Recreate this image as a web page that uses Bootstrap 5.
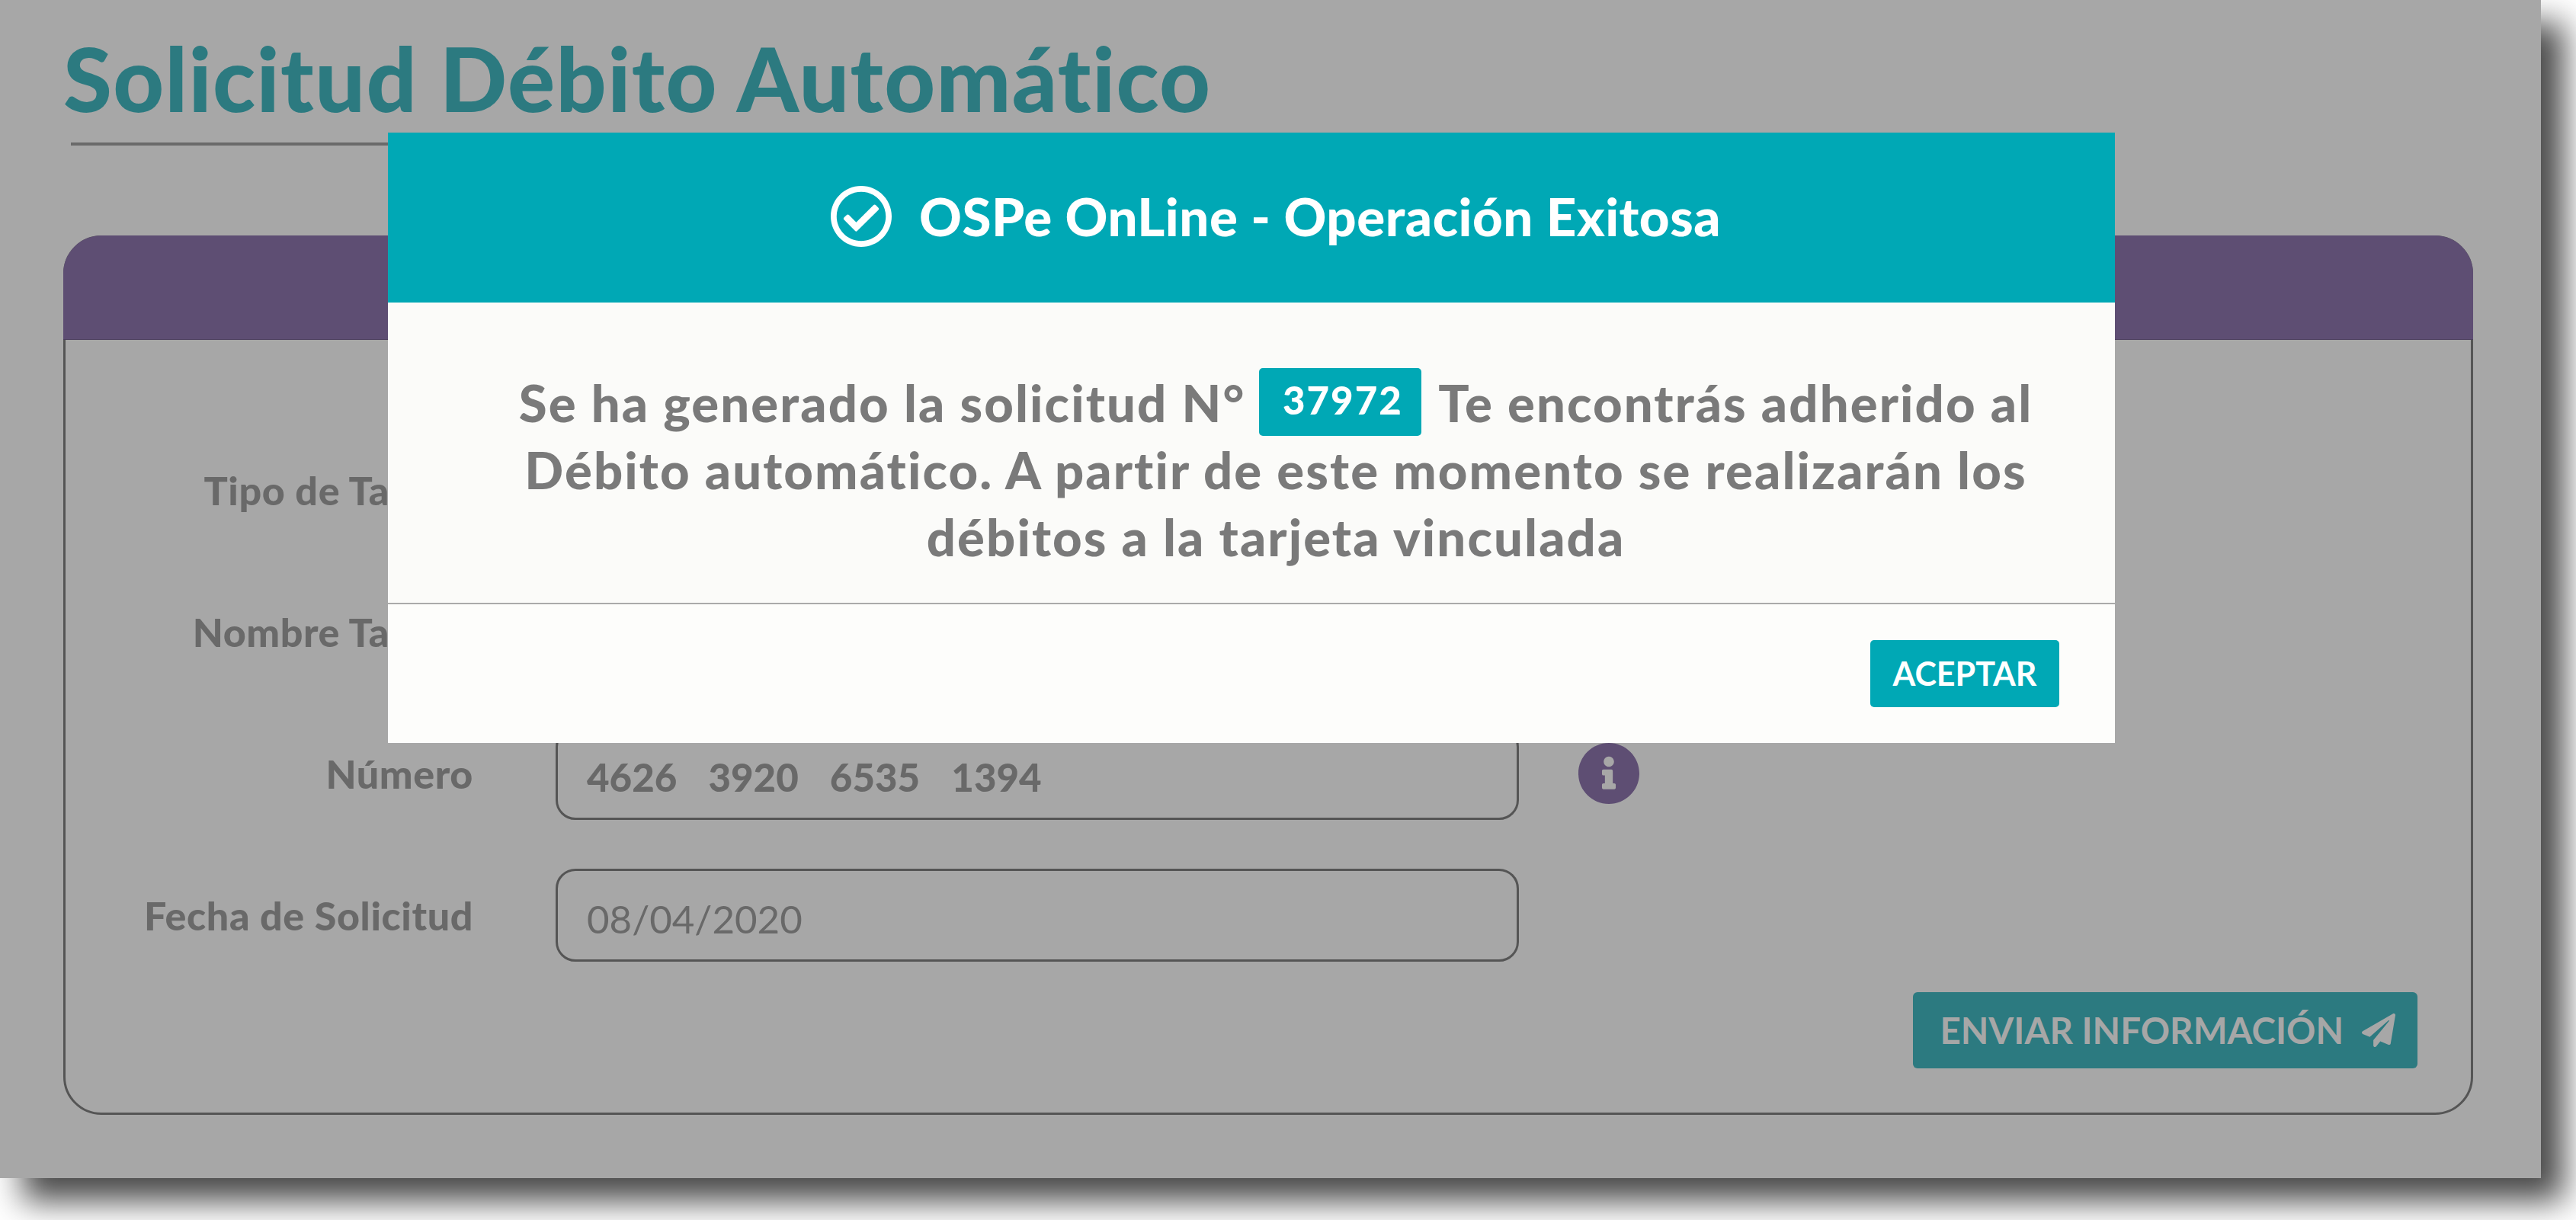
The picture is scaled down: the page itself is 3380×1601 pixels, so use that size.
<!DOCTYPE html>
<html lang="es">

<head>
    <meta charset="utf-8">
    <title>Solicitud Débito Automático</title>
    <link rel="stylesheet" href="https://cdn.jsdelivr.net/npm/bootstrap@5.3.0/dist/css/bootstrap.min.css">
    <style>
        body {
            min-height: 1601px;
            background: #fff;
            font-family: "Lato", sans-serif;
            font-variant-ligatures: none;
        }

        .pantalla {
            position: relative;
            width: 3334px;
            height: 1546px;
            padding: 26px 89px 0 83px;
            background: #a7a7a7;
            box-shadow: 30px 30px 40px #4a4a4a;
        }

        .titulo {
            margin: 0;
            font-size: 116px;
            font-weight: 900;
            line-height: 154px;
            letter-spacing: 1.4px;
            color: #2c7a80;
        }

        .subrayado {
            width: 800px;
            height: 4px;
            margin: 7px 0 0 10px;
            background: #6a6a6a;
        }

        .tarjeta {
            height: 1154px;
            margin-top: 118px;
            background: transparent;
            border: 3px solid #555;
            border-radius: 50px;
        }

        .tarjeta .tarjeta-cabecera {
            height: 137px;
            margin: -3px -3px 0;
            background: #5e4e73;
            border-radius: 50px 50px 0 0;
        }

        .tarjeta-cuerpo {
            padding: 136px 70px 0 0;
        }

        .fila {
            height: 122px;
            margin-bottom: 64px;
        }

        .etiqueta {
            width: 535px;
            margin: 0 108px 0 0;
            font-size: 52px;
            font-weight: 900;
            letter-spacing: .6px;
            text-align: right;
            color: #696969;
        }

        .campo.form-control {
            width: 1264px;
            height: 122px;
            padding: 8px 38px 0;
            font-size: 51px;
            color: #696969;
            background: transparent;
            border: 3px solid #555;
            border-radius: 26px;
        }

        .campo-numero.form-control {
            font-weight: 900;
            word-spacing: 29px;
        }

        .icono-info {
            width: 80px;
            height: 80px;
            margin-left: 78px;
            fill: #5e4e73;
        }

        .btn-enviar.btn {
            height: 100px;
            margin-top: -24px;
            padding: 0 29px 0 35px;
            font-size: 47.5px;
            font-weight: 700;
            color: #a7a7a7;
            background: #2c7a80;
            border: 0;
            border-radius: 6px;
        }

        .btn-enviar svg {
            width: 44px;
            height: 44px;
            margin-left: 24px;
            fill: #a7a7a7;
        }

        .aviso.modal {
            position: absolute;
            width: 100%;
            height: 100%;
            overflow: visible;
        }

        .aviso .modal-dialog {
            max-width: none;
            width: 2266px;
            margin: 174px 0 0 509px;
        }

        .aviso .modal-content {
            background: #fbfbf9;
            border: 0;
            border-radius: 0;
        }

        .aviso .modal-header {
            height: 223px;
            padding: 0 0 4px 64px;
            color: #fff;
            background: #00a8b5;
            border: 0;
            border-radius: 0;
        }

        .aviso .modal-title {
            font-size: 69px;
            font-weight: 900;
            line-height: 1;
            letter-spacing: .5px;
        }

        .aviso .modal-header svg {
            width: 80px;
            height: 80px;
            margin-right: 36px;
            fill: #fff;
        }

        .aviso .modal-body {
            height: 396px;
            padding: 87px 0 0 64px;
            font-size: 67px;
            font-weight: 900;
            line-height: 88px;
            letter-spacing: 2.1px;
            text-align: center;
            color: #7a7a7a;
            border-bottom: 2px solid #aaa;
        }

        .numero-solicitud {
            display: inline-block;
            width: 213px;
            height: 89px;
            margin: -1px 6px -1px 0;
            padding-left: 6px;
            vertical-align: top;
            font-size: 51px;
            line-height: 84px;
            letter-spacing: 2px;
            color: #fff;
            background: #00a8b5;
            border-radius: 5px;
        }

        .aviso .modal-footer {
            height: 182px;
            padding: 0 73px 0 0;
            background: #fdfdfb;
            border: 0;
            border-radius: 0;
        }

        .btn-aceptar.btn {
            width: 248px;
            height: 88px;
            margin: 0;
            padding: 0;
            font-size: 43px;
            font-weight: 700;
            color: #fff;
            background: #00a8b5;
            border: 0;
            border-radius: 5px;
        }
    </style>
</head>

<body>
    <div class="pantalla">
        <h1 class="titulo">Solicitud Débito Automático</h1>
        <div class="subrayado"></div>

        <div class="card tarjeta">
            <div class="card-header tarjeta-cabecera"></div>
            <div class="tarjeta-cuerpo">
                <div class="d-flex align-items-center fila">
                    <label class="etiqueta">Tipo de Tarjeta</label>
                    <input class="form-control campo" type="text" value="VISA" readonly>
                </div>
                <div class="d-flex align-items-center fila">
                    <label class="etiqueta">Nombre Tarjeta</label>
                    <input class="form-control campo" type="text" value="" readonly>
                </div>
                <div class="d-flex align-items-center fila">
                    <label class="etiqueta">Número</label>
                    <input class="form-control campo campo-numero" type="text" value="4626 3920 6535 1394" readonly>
                    <svg class="icono-info" viewBox="8 8 496 496"><path d="M256 8C119.043 8 8 119.083 8 256c0 136.997 111.043 248 248 248s248-111.003 248-248C504 119.083 392.957 8 256 8zm0 110c23.196 0 42 18.804 42 42s-18.804 42-42 42-42-18.804-42-42 18.804-42 42-42zm56 254c0 6.627-5.373 12-12 12h-88c-6.627 0-12-5.373-12-12v-24c0-6.627 5.373-12 12-12h12v-64h-12c-6.627 0-12-5.373-12-12v-24c0-6.627 5.373-12 12-12h64c6.627 0 12 5.373 12 12v100h12c6.627 0 12 5.373 12 12v24z"/></svg>
                </div>
                <div class="d-flex align-items-center fila">
                    <label class="etiqueta">Fecha de Solicitud</label>
                    <input class="form-control campo" type="text" value="08/04/2020" readonly>
                </div>
                <div class="d-flex justify-content-end">
                    <button class="btn btn-enviar d-flex align-items-center" type="button">ENVIAR INFORMACIÓN
                        <svg viewBox="0 0 512 512"><path d="M476 3.2L12.5 270.6c-18.1 10.4-15.8 35.6 2.2 43.2L121 358.4l287.3-253.2c5.5-4.9 13.3 2.6 8.6 8.3L176 407v80.5c0 23.6 28.5 32.9 42.5 15.8L282 426l124.6 52.2c14.2 6 30.4-2.9 33-18.2l72-432C515 7.8 493.3-6.8 476 3.2z"/></svg>
                    </button>
                </div>
            </div>
        </div>

        <div class="modal d-block aviso">
            <div class="modal-dialog">
                <div class="modal-content">
                    <div class="modal-header justify-content-center">
                        <svg viewBox="8 8 496 496"><path d="M256 8C119.033 8 8 119.033 8 256s111.033 248 248 248 248-111.033 248-248S392.967 8 256 8zm0 48c110.532 0 200 89.451 200 200 0 110.532-89.451 200-200 200-110.532 0-200-89.451-200-200 0-110.532 89.451-200 200-200m140.204 130.267l-22.536-22.718c-4.667-4.705-12.265-4.736-16.97-.068L215.346 303.697l-59.792-60.277c-4.667-4.705-12.265-4.736-16.97-.069l-22.719 22.536c-4.705 4.667-4.736 12.265-.068 16.971l90.781 91.516c4.667 4.705 12.265 4.736 16.97.068l172.589-171.204c4.704-4.668 4.734-12.266.067-16.971z"/></svg>
                        <h5 class="modal-title">OSPe OnLine - Operación Exitosa</h5>
                    </div>
                    <div class="modal-body">
                        Se ha generado la solicitud N° <span class="numero-solicitud">37972</span> Te encontrás adherido al<br>
                        Débito automático. A partir de este momento se realizarán los<br>
                        débitos a la tarjeta vinculada
                    </div>
                    <div class="modal-footer">
                        <button class="btn btn-aceptar" type="button">ACEPTAR</button>
                    </div>
                </div>
            </div>
        </div>
    </div>

    <script src="https://cdn.jsdelivr.net/npm/bootstrap@5.3.0/dist/js/bootstrap.bundle.min.js"></script>
</body>

</html>
